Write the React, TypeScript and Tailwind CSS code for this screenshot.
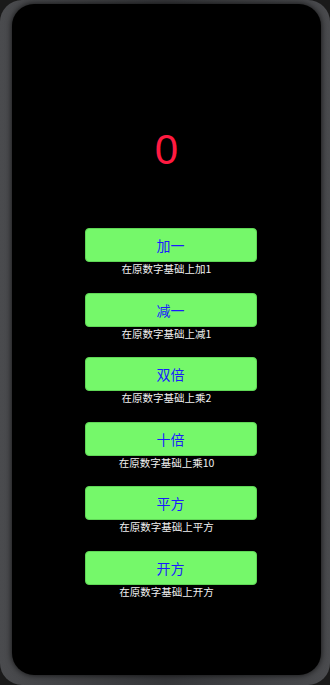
import React from "react";

const items = [
  { label: "加一", desc: "在原数字基础上加1" },
  { label: "减一", desc: "在原数字基础上减1" },
  { label: "双倍", desc: "在原数字基础上乘2" },
  { label: "十倍", desc: "在原数字基础上乘10" },
  { label: "平方", desc: "在原数字基础上平方" },
  { label: "开方", desc: "在原数字基础上开方" },
];

export default function App() {
  return (
    <div
      className="w-[330px] h-[685px] bg-[#1a1a1a] overflow-hidden"
      style={{ fontFamily: '"Noto Sans CJK SC", "Liberation Sans", sans-serif' }}
    >
      <div className="w-full h-full rounded-[22px] bg-gradient-to-r from-[#4a4b4e] via-[#36373a] to-[#4a4b4e] pt-[4px] pl-[12px] pr-[9px] pb-[10px]">
        <div className="w-full h-full rounded-[22px] bg-black shadow-[0_0_6px_rgba(0,0,0,0.8)] flex flex-col items-center">
          <div
            className="mt-[118px] h-[56px] text-[42px] leading-[56px] text-[#ff1a40]"
            style={{ fontFamily: '"Liberation Sans", sans-serif' }}
          >
            0
          </div>
          <div className="mt-[50px] flex flex-col gap-[16.5px] w-full items-center">
            {items.map((it) => (
              <div key={it.label} className="flex flex-col items-center w-full">
                <button className="ml-[8px] w-[172px] h-[34px] rounded-[4px] bg-[#75f86a] border border-[#5fd656] text-[#1a1aff] text-[14px] leading-[32px]">
                  {it.label}
                </button>
                <div className="h-[14px] text-[10.5px] leading-[14px] text-[#f0f0f0]">
                  {it.desc}
                </div>
              </div>
            ))}
          </div>
        </div>
      </div>
    </div>
  );
}
